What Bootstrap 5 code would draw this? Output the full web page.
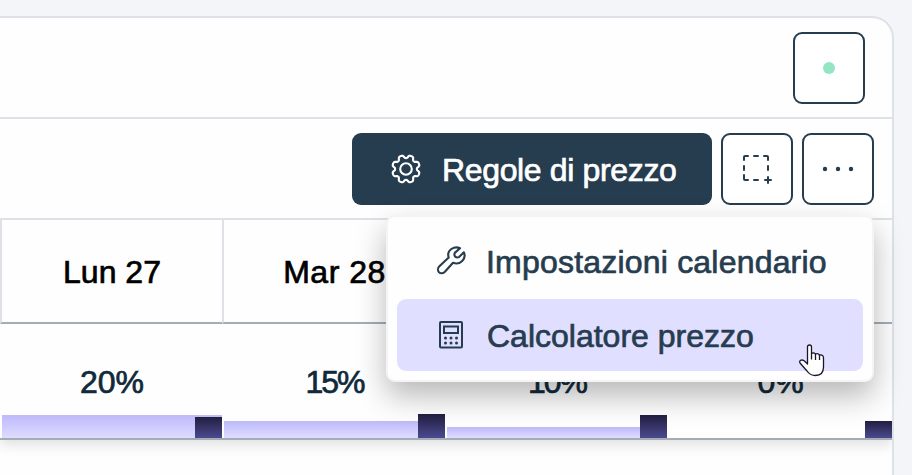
<!DOCTYPE html>
<html lang="it">
<head>
<meta charset="utf-8">
<meta name="viewport" content="width=device-width, initial-scale=1">
<title>Calendario</title>
<link href="https://cdn.jsdelivr.net/npm/bootstrap@5.3.0/dist/css/bootstrap.min.css" rel="stylesheet">
<style>
:root { --ink: #263c4f; --line: #dee2e6; --rule: #a3adb8; }
body { background: #f4f5f8; font-family: "Liberation Sans", Arial, sans-serif; font-size: 32px; line-height: 40px; height: 475px; -webkit-text-stroke: .7px currentColor; }
.panel { margin: 16px 18px 0 0; height: 480px; background: #fefefe; border: solid var(--line); border-width: 2px 2px 0 0; border-top-right-radius: 22px; }
.bar-top, .bar-tools { height: 101px; border-bottom: 2px solid var(--line); }
.bar-top { padding-right: 27px; }
.bar-tools { padding-right: 18px; gap: 9px; }
.tool { width: 72px; height: 72px; padding: 0; border: 2px solid var(--ink); border-radius: 9px; background: #fff; color: var(--ink); }
.tool:hover { border-color: var(--ink); background: #fff; }
.rules, .rules:hover { width: 360px; height: 72px; border: 0; border-radius: 9px; background: var(--ink); color: #fff; font-size: 32px; padding: 0 0 0 37px; gap: 19px; letter-spacing: -.35px; -webkit-text-stroke: .7px #fff; }
.rules span, .tool-item span, .day-name span { padding-top: 2px; }
.status { width: 12px; height: 12px; background: #94e5c3; }
.days { display: grid; grid-template-columns: 222px 223px 222px 225px; }
.day-name { height: 104px; border-left: 2px solid var(--line); border-bottom: 2px solid var(--rule); color: #000; }
.day-name + .day-name { letter-spacing: .5px; }
.day-rate { height: 116px; border-bottom: 2px solid var(--rule); padding: 38px 0 0 2px; color: #10293b; }
.tight { letter-spacing: -2px; }
.days-wrap { box-shadow: 0 5px 12px rgba(0,0,0,.12); clip-path: inset(0 0 -40px 0); }
.level { flex: 0 0 100%; background: linear-gradient(#bdb9fb, #dfdcff); }
.level-end { flex: 0 0 27px; margin-left: -27px; background: linear-gradient(#211f3f, #4c4990); }
.tool-menu { display: block; left: 386px; top: 215px; width: 488px; height: 167px; padding: 8px 9px 10px; border: 2px solid #f4f4f5; border-radius: 9px; background: #fefefe; box-shadow: 0 14px 30px rgba(0,0,0,.28); background-clip: border-box; }
.tool-item { height: 72px; padding: 0 0 0 39px; gap: 18px; border-radius: 9px; color: var(--ink); font-size: 32px; letter-spacing: .2px; }
.tool-item + .tool-item { margin-top: 2px; letter-spacing: 0; gap: 19px; }
.tool-item.chosen, .tool-item.chosen:hover { background: #e1dfff; color: var(--ink); }
.pointer { position: absolute; left: 798px; top: 343px; z-index: 1100; }
svg { flex: none; }
</style>
<script src="https://cdn.jsdelivr.net/npm/bootstrap@5.3.0/dist/js/bootstrap.bundle.min.js"></script>
</head>
<body class="overflow-hidden position-relative">
<main class="panel overflow-hidden">
  <div class="bar-top d-flex align-items-center justify-content-end">
    <button class="tool btn d-flex align-items-center justify-content-center" type="button" aria-label="Stato"><span class="status rounded-circle"></span></button>
  </div>
  <div class="bar-tools d-flex align-items-center justify-content-end">
    <button class="rules btn d-flex align-items-center" type="button">
      <svg width="34" height="34" viewBox="-17 -17 34 34" fill="none" stroke="#fff" stroke-width="2.1" stroke-linejoin="round"><path id="gear"/><circle r="5.800"/></svg>
      <span>Regole di prezzo</span>
    </button>
    <button class="tool btn d-flex align-items-center justify-content-center" type="button" aria-label="Seleziona">
      <svg width="32" height="32" viewBox="0 0 32 32" fill="none" stroke="currentColor" stroke-width="2" stroke-linecap="round"><path d="M3 7V4q0-1 1-1H7M13 3h4M23 3h3q1 0 1 1V7M3 13v4M27 13v4M3 22v4q0 1 1 1H7M13 27h4M27 24v6M24 27h6"/></svg>
    </button>
    <button class="tool btn d-flex align-items-center justify-content-center" type="button" aria-label="Altro">
      <svg width="36" height="8" viewBox="0 0 36 8" fill="currentColor"><circle cx="5" cy="4" r="2.200"/><circle cx="18" cy="4" r="2.200"/><circle cx="31" cy="4" r="2.200"/></svg>
    </button>
  </div>
  <div class="days-wrap">
    <div class="days">
      <div class="day-name d-flex align-items-center justify-content-center"><span>Lun 27</span></div>
      <div class="day-name d-flex align-items-center justify-content-center"><span>Mar 28</span></div>
      <div class="day-name"></div>
      <div class="day-name"></div>
    </div>
    <div class="days">
      <div class="day-rate d-flex flex-column text-center"><span>20%</span><div class="d-flex align-items-end mt-auto"><div class="level" style="height:23px"></div><div class="level-end" style="height:21px"></div></div></div>
      <div class="day-rate d-flex flex-column text-center"><span class="tight">15%</span><div class="d-flex align-items-end mt-auto"><div class="level" style="height:17px"></div><div class="level-end" style="height:24px"></div></div></div>
      <div class="day-rate d-flex flex-column text-center"><span class="tight">10%</span><div class="d-flex align-items-end mt-auto"><div class="level" style="height:11px"></div><div class="level-end" style="height:23px"></div></div></div>
      <div class="day-rate d-flex flex-column text-center"><span>0%</span><div class="d-flex align-items-end mt-auto"><div class="level" style="height:0"></div><div class="level-end" style="height:17px"></div></div></div>
    </div>
  </div>
</main>
<div class="tool-menu dropdown-menu">
  <a class="tool-item dropdown-item d-flex align-items-center" href="#">
    <svg width="32" height="32" viewBox="0 0 32 32" fill="none" stroke="currentColor" stroke-width="2.100" stroke-linejoin="round"><path d="M24 3.200C20 1.400 15.500 2.700 13.300 6C12 8 12 10.500 12.700 12.600L3.400 21.300C1.600 23 1.500 25.600 3 27.200C4.600 28.700 7.200 28.600 8.900 26.800L17 17.800C20 19 23.800 18.400 26.200 16C28.500 13.700 29.200 10.300 27.900 7.300L23 12.100Q20.800 13 19.200 11.600Q17.800 10 18.800 7.900Z"/></svg>
    <span>Impostazioni calendario</span>
  </a>
  <a class="tool-item chosen dropdown-item d-flex align-items-center" href="#">
    <svg width="32" height="32" viewBox="0 0 32 32" fill="none" stroke="currentColor" stroke-width="2"><rect x="4" y="3" width="22" height="25.500" rx="1"/><rect x="8" y="7.500" width="14" height="6.500"/><path stroke-width="3" stroke-linecap="round" d="M9.500 19h.01M15 19h.01M20.500 19h.01M9.500 24h.01M15 24h.01M20.500 24h.01"/></svg>
    <span>Calcolatore prezzo</span>
  </a>
</div>
<svg class="pointer" width="28" height="34" viewBox="0 0 28 34" fill="#fff" stroke="#16162b" stroke-width="1.300" stroke-linejoin="round"><path d="M9.500 18V4Q9.500 2 11.500 2T13.500 4V10.500Q15.500 9 17.500 11Q20 10 21.500 12Q25.500 11.500 25.500 15V24Q25.500 32.500 17.500 32.500Q12 32.500 9 28L2 20Q1 18 3 17.200Q5 16.500 7 18.500L9.500 21Z"/><path fill="none" d="M13.500 10.500v6M17.500 11v6M21.500 12v5"/></svg>
<script>
// Cog outline: eight rounded teeth traced around the centre.
let outline = '';
for (let i = 0; i <= 240; i++) {
  const a = i / 240 * Math.PI * 2;
  const r = 12.300 + 1.700 * Math.tanh(1.600 * Math.cos(8 * (a - Math.PI / 8)) + .400);
  outline += (i ? 'L' : 'M') + (r * Math.cos(a)).toFixed(2) + ' ' + (r * Math.sin(a)).toFixed(2);
}
document.getElementById('gear').setAttribute('d', outline + 'Z');
</script>
</body>
</html>
